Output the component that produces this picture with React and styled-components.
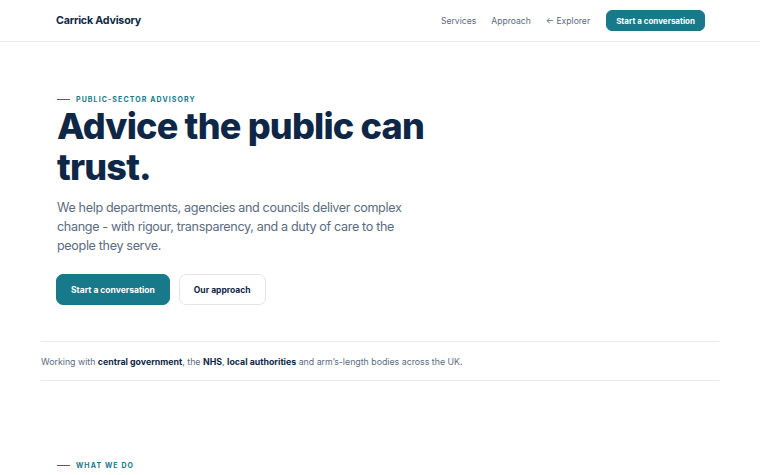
import React from "react";
import styled, { createGlobalStyle } from "styled-components";

const GlobalStyle = createGlobalStyle`
  * { box-sizing: border-box; }
  body {
    margin: 0;
    background: #fff;
    font-family: Inter, "Liberation Sans", sans-serif;
    color: #0f2747;
  }
  a { text-decoration: none; color: inherit; }
`;

const navy = "#0f2747";
const teal = "#18798a";
const slate = "#5b6b80";

function App() {
  return (
    <>
      <GlobalStyle />
      <Header>
        <HeaderInner>
          <Logo>Carrick Advisory</Logo>
          <Nav>
            <NavLink href="#services">Services</NavLink>
            <NavLink href="#approach">Approach</NavLink>
            <NavLink href="#explorer">← Explorer</NavLink>
            <Button $small href="#contact">
              Start a conversation
            </Button>
          </Nav>
        </HeaderInner>
      </Header>

      <Container>
        <Hero>
          <Eyebrow>Public-sector advisory</Eyebrow>
          <Title>
            Advice the public can
            <br />
            trust.
          </Title>
          <Lead>
            We help departments, agencies and councils deliver complex
            change - with rigour, transparency, and a duty of care to the
            people they serve.
          </Lead>
          <Actions>
            <Button href="#contact">Start a conversation</Button>
            <Button $ghost href="#approach">
              Our approach
            </Button>
          </Actions>
        </Hero>

        <Strip>
          Working with <b>central government</b>, the <b>NHS</b>,{" "}
          <b>local authorities</b> and arm’s-length bodies across the UK.
        </Strip>

        <Section>
          <Eyebrow>What we do</Eyebrow>
        </Section>
      </Container>
    </>
  );
}

export default App;

const Header = styled.header`
  border-bottom: 1px solid #e6e9ee;
`;

const HeaderInner = styled.div`
  max-width: 678px;
  margin: 0 auto;
  padding: 0 14px 0 15px;
  height: 41px;
  display: flex;
  align-items: center;
  justify-content: space-between;
`;

const Logo = styled.div`
  font-size: 10.7px;
  font-weight: 700;
  letter-spacing: -0.2px;
  color: ${navy};
`;

const Nav = styled.nav`
  display: flex;
  align-items: center;
  gap: 15px;
`;

const NavLink = styled.a`
  font-size: 8.6px;
  color: ${slate};
`;

const Button = styled.a`
  display: inline-flex;
  align-items: center;
  justify-content: center;
  height: ${({ $small }) => ($small ? "21px" : "31px")};
  padding: ${({ $small }) => ($small ? "0 9px" : "0 14px")};
  margin-left: ${({ $small }) => ($small ? "1px" : "0")};
  border-radius: ${({ $small }) => ($small ? "6px" : "7px")};
  font-size: ${({ $small }) => ($small ? "8px" : "8.5px")};
  font-weight: 700;
  background: ${({ $ghost }) => ($ghost ? "#fff" : teal)};
  color: ${({ $ghost }) => ($ghost ? navy : "#fff")};
  border: 1px solid ${({ $ghost }) => ($ghost ? "#e2e6ec" : teal)};
`;

const Container = styled.main`
  max-width: 678px;
  margin: 0 auto;
`;

const Hero = styled.section`
  padding: 53px 15px 36px 16px;
`;

const Eyebrow = styled.div`
  display: flex;
  align-items: center;
  gap: 6px;
  font-size: 7px;
  font-weight: 700;
  letter-spacing: 1.1px;
  text-transform: uppercase;
  color: ${teal};

  &::before {
    content: "";
    width: 13px;
    height: 1.6px;
    background: ${teal};
  }
`;

const Title = styled.h1`
  margin: 2px 0 0;
  font-size: 36px;
  line-height: 41px;
  font-weight: 800;
  letter-spacing: -0.8px;
  color: ${navy};
`;

const Lead = styled.p`
  margin: 10px 0 0;
  max-width: 360px;
  font-size: 12.6px;
  line-height: 19px;
  letter-spacing: -0.35px;
  color: ${slate};
`;

const Actions = styled.div`
  display: flex;
  gap: 9px;
  margin-top: 19px;
  margin-left: -1px;
`;

const Strip = styled.div`
  border-top: 1px solid #e6e9ee;
  border-bottom: 1px solid #e6e9ee;
  padding: 13.5px 0;
  font-size: 8.8px;
  color: ${slate};

  b {
    font-weight: 700;
    color: ${navy};
  }
`;

const Section = styled.section`
  padding: 80px 16px 40px;
`;
